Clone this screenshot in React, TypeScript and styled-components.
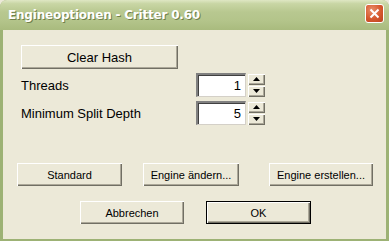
import { styled, createGlobalStyle } from "styled-components";

const GlobalStyle = createGlobalStyle`
  html, body {
    margin: 0;
    padding: 0;
    background: #ece9d8;
  }
`;

const Window = styled.div`
  width: 389px;
  height: 241px;
  box-sizing: border-box;
  display: flex;
  flex-direction: column;
  background: #9db275;
  border-radius: 7px 7px 0 0;
  overflow: hidden;
  font-family: "Liberation Sans", Arial, sans-serif;
`;

const TitleBar = styled.div`
  height: 30px;
  flex: none;
  display: flex;
  align-items: center;
  justify-content: space-between;
  padding: 0 5px 0 8px;
  background: linear-gradient(
    180deg,
    #dfe7c4 0%,
    #c9d6a5 12%,
    #b8c890 40%,
    #b3c48a 70%,
    #a9bb7e 100%
  );
`;

const Title = styled.span`
  color: #ffffff;
  font-family: "DejaVu Sans", sans-serif;
  font-weight: bold;
  font-size: 12px;
  letter-spacing: -0.2px;
  text-shadow: 1px 1px 0 #6f7f4a;
`;

const CloseButton = styled.div`
  width: 19px;
  height: 19px;
  box-sizing: border-box;
  border: 1px solid #ffffff;
  border-radius: 3px;
  background: radial-gradient(circle at 35% 30%, #e88e6a 0%, #d6582e 55%, #bb4420 100%);
  display: flex;
  align-items: center;
  justify-content: center;
  margin-top: -3px;
`;

const Body = styled.div`
  flex: 1;
  margin: 0 3px 2px 3px;
  background: #ece9d8;
  padding: 15px 0 0 18px;
  display: flex;
  flex-direction: column;
  color: #000000;
`;

const Button = styled.button<{ $w: number; $h?: number; $default?: boolean; $size?: number; $ml?: number }>`
  width: ${({ $w }) => $w}px;
  height: ${({ $h }) => $h ?? 23}px;
  margin-left: ${({ $ml }) => $ml ?? 0}px;
  box-sizing: border-box;
  padding: 0;
  background: #ece9d8;
  font-family: "Liberation Sans", Arial, sans-serif;
  font-size: ${({ $size }) => $size ?? 11}px;
  color: #000000;
  border: none;
  box-shadow: ${({ $default }) =>
    $default
      ? "inset 0 0 0 1px #000000, inset 2px 2px 0 #ffffff, inset -2px -2px 0 #716f64, inset -3px -3px 0 #aca899"
      : "inset 1px 1px 0 #ffffff, inset -1px -1px 0 #716f64, inset -2px -2px 0 #aca899"};
`;

const SpinGrid = styled.div`
  display: grid;
  grid-template-columns: 175px auto;
  row-gap: 4px;
  margin-top: 4px;
  align-items: center;
`;

const Label = styled.span`
  font-size: 13px;
`;

const Spin = styled.div`
  display: flex;
  align-items: center;
  gap: 2px;
`;

const SpinInput = styled.div`
  width: 50px;
  height: 24px;
  box-sizing: border-box;
  background: #ffffff;
  border-top: 2px solid #808080;
  border-left: 2px solid #808080;
  border-right: 1px solid #d4d0c8;
  border-bottom: 1px solid #d4d0c8;
  box-shadow: inset 1px 1px 0 #404040;
  display: flex;
  align-items: center;
  justify-content: flex-end;
  padding-right: 4px;
  font-size: 13px;
`;

const Arrows = styled.div`
  display: flex;
  flex-direction: column;
  gap: 1px;
`;

const ArrowButton = styled.div`
  width: 17px;
  height: 11px;
  box-sizing: border-box;
  background: #ece9d8;
  box-shadow: inset 1px 1px 0 #ffffff, inset -1px -1px 0 #716f64, inset -2px -2px 0 #aca899;
  display: flex;
  align-items: center;
  justify-content: center;
`;

const ButtonRow = styled.div<{ $left: number; $top: number }>`
  display: flex;
  margin-left: ${({ $left }) => $left}px;
  margin-top: ${({ $top }) => $top}px;
`;

function Arrow({ up }: { up?: boolean }) {
  return (
    <svg width="7" height="4" viewBox="0 0 7 4">
      <polygon points={up ? "3.5,0 7,4 0,4" : "0,0 7,0 3.5,4"} fill="#000000" />
    </svg>
  );
}

function SpinBox({ value }: { value: number }) {
  return (
    <Spin>
      <SpinInput>{value}</SpinInput>
      <Arrows>
        <ArrowButton>
          <Arrow up />
        </ArrowButton>
        <ArrowButton>
          <Arrow />
        </ArrowButton>
      </Arrows>
    </Spin>
  );
}

export default function App() {
  return (
    <>
      <GlobalStyle />
      <Window>
        <TitleBar>
          <Title>Engineoptionen - Critter 0.60</Title>
          <CloseButton>
            <svg width="11" height="11" viewBox="0 0 11 11">
              <path d="M1.5 1.5 L9.5 9.5 M9.5 1.5 L1.5 9.5" stroke="#ffffff" strokeWidth="2" />
            </svg>
          </CloseButton>
        </TitleBar>
        <Body>
          <Button $w={157} $h={24} $size={13}>
            Clear Hash
          </Button>
          <SpinGrid>
            <Label>Threads</Label>
            <SpinBox value={1} />
            <Label>Minimum Split Depth</Label>
            <SpinBox value={5} />
          </SpinGrid>
          <ButtonRow $left={-4} $top={38}>
            <Button $w={105}>Standard</Button>
            <Button $w={96} $ml={21}>Engine ändern...</Button>
            <Button $w={104} $ml={30}>Engine erstellen...</Button>
          </ButtonRow>
          <ButtonRow $left={59} $top={15}>
            <Button $w={104}>Abbrechen</Button>
            <Button $w={105} $ml={22} $default>
              OK
            </Button>
          </ButtonRow>
        </Body>
      </Window>
    </>
  );
}
